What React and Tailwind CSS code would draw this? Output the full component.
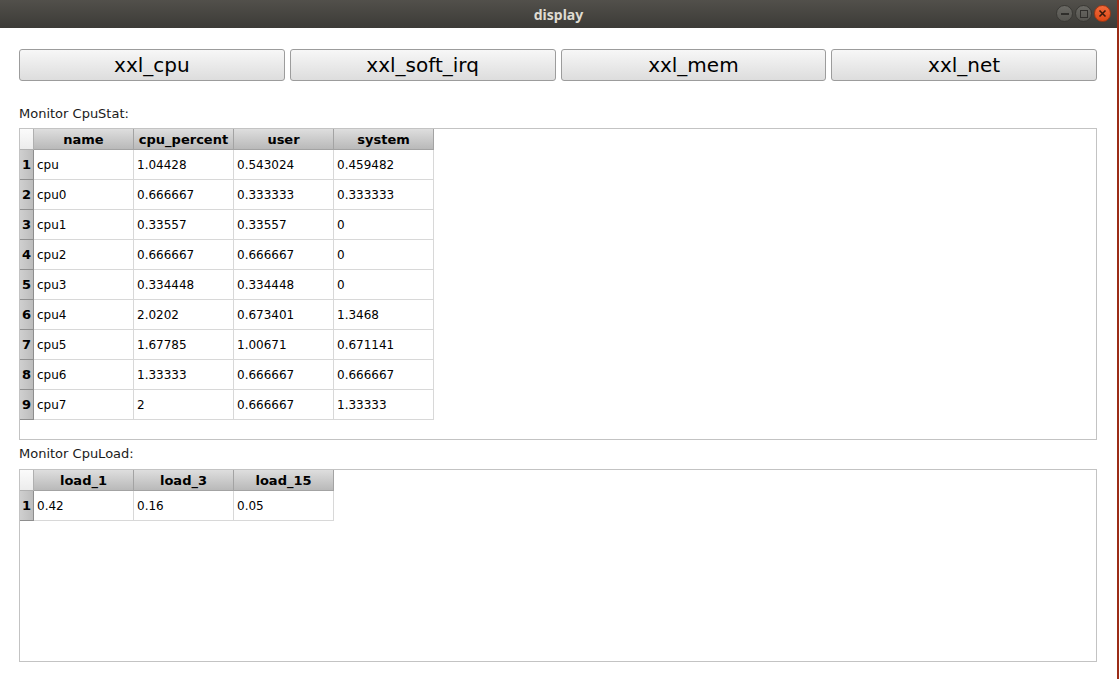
import React from "react";

const cpuRows = [
  ["cpu", "1.04428", "0.543024", "0.459482"],
  ["cpu0", "0.666667", "0.333333", "0.333333"],
  ["cpu1", "0.33557", "0.33557", "0"],
  ["cpu2", "0.666667", "0.666667", "0"],
  ["cpu3", "0.334448", "0.334448", "0"],
  ["cpu4", "2.0202", "0.673401", "1.3468"],
  ["cpu5", "1.67785", "1.00671", "0.671141"],
  ["cpu6", "1.33333", "0.666667", "0.666667"],
  ["cpu7", "2", "0.666667", "1.33333"],
];

const loadRows = [["0.42", "0.16", "0.05"]];

function Grid({ headers, rows }) {
  return (
    <div className="flex flex-col">
      <div className="flex h-[21px]">
        <div className="w-[14px] h-full bg-gradient-to-b from-[#fbfbfb] to-[#ececec] border-r border-b border-[#b0b0b0]" />
        {headers.map((h) => (
          <div
            key={h}
            className="w-[100px] h-full flex items-center justify-center pt-[1px] font-bold text-[13px] text-black bg-gradient-to-b from-[#dedede] to-[#b9b9b9] border-r border-b border-[#a3a3a3]"
          >
            {h}
          </div>
        ))}
      </div>
      {rows.map((r, i) => (
        <div key={i} className="flex h-[30px]">
          <div className="w-[14px] h-full flex items-center justify-center font-bold text-[13px] text-black bg-gradient-to-r from-[#cfcfcf] to-[#bdbdbd] border-r border-b border-[#8e8e8e]">
            {i + 1}
          </div>
          {r.map((c, j) => (
            <div
              key={j}
              className="w-[100px] h-full flex items-center pl-[3px] text-[12px] text-black bg-white border-r border-b border-[#d8d8d8]"
            >
              {c}
            </div>
          ))}
        </div>
      ))}
    </div>
  );
}

export default function App() {
  return (
    <div
      className="flex w-[1119px] h-[679px] overflow-hidden bg-white"
      style={{ fontFamily: '"DejaVu Sans", sans-serif' }}
    >
      <div className="flex flex-col w-[1117px] h-full">
        <div className="relative h-[28px] flex items-center justify-center bg-gradient-to-b from-[#52504b] to-[#3c3b37]">
          <span
            className="text-[14px] font-bold text-[#dfdbd2]"
            style={{ fontFamily: '"Noto Sans", sans-serif' }}
          >
            display
          </span>
          <div className="absolute right-[6px] top-[5px] flex gap-[2px]">
            <div className="w-[17px] h-[17px] rounded-full bg-gradient-to-b from-[#6a6964] to-[#55544f] border border-[#3a3935] flex items-center justify-center">
              <div className="w-[8px] h-[2px] bg-[#2f2e2b]" />
            </div>
            <div className="w-[17px] h-[17px] rounded-full bg-gradient-to-b from-[#6a6964] to-[#55544f] border border-[#3a3935] flex items-center justify-center">
              <div className="w-[8px] h-[8px] border-[1.5px] border-[#2f2e2b]" />
            </div>
            <div className="w-[17px] h-[17px] rounded-full bg-gradient-to-b from-[#f26a3a] to-[#dd4814] border border-[#a53712] flex items-center justify-center">
              <svg width="9" height="9" viewBox="0 0 9 9">
                <path d="M1.5 1.5 L7.5 7.5 M7.5 1.5 L1.5 7.5" stroke="#3a1a0c" strokeWidth="1.6" />
              </svg>
            </div>
          </div>
        </div>

        <div className="flex flex-col pl-[19px] pr-[20px] pt-[21px]">
          <div className="grid grid-cols-4 gap-[5px]">
            {["xxl_cpu", "xxl_soft_irq", "xxl_mem", "xxl_net"].map((b) => (
              <div
                key={b}
                className="h-[32px] flex items-center justify-center rounded-[3px] border border-[#9c9c9c] bg-gradient-to-b from-[#f7f7f7] to-[#dddddd] text-[20px] text-black"
              >
                {b}
              </div>
            ))}
          </div>

          <div className="h-[16px] mt-[25px] mb-[6px] text-[13px] leading-[16px] text-[#1a1a1a]">
            Monitor CpuStat:
          </div>
          <div className="h-[312px] border border-[#c3c3c3] bg-white">
            <Grid headers={["name", "cpu_percent", "user", "system"]} rows={cpuRows} />
          </div>

          <div className="h-[16px] mt-[6px] mb-[7px] text-[13px] leading-[16px] text-[#1a1a1a]">
            Monitor CpuLoad:
          </div>
          <div className="h-[193px] border border-[#c3c3c3] bg-white">
            <Grid headers={["load_1", "load_3", "load_15"]} rows={loadRows} />
          </div>
        </div>
      </div>
      <div className="w-[2px] h-full bg-[#9b2c17]" />
    </div>
  );
}
